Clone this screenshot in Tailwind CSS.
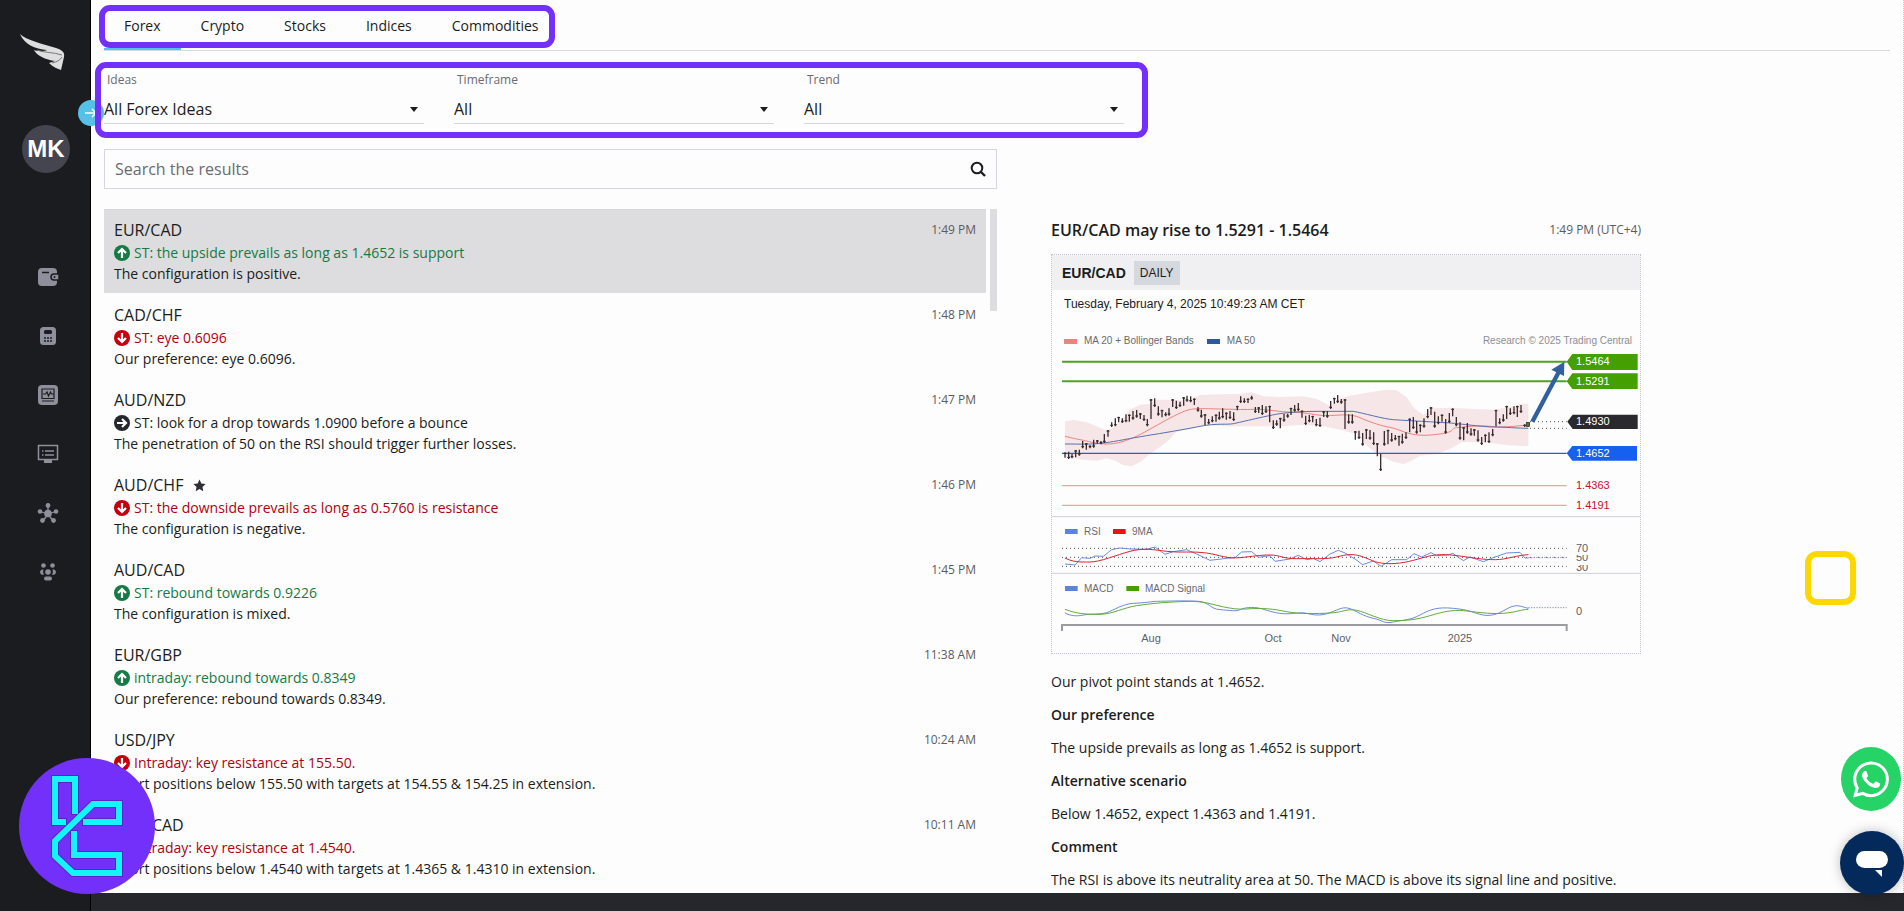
<!DOCTYPE html>
<html lang="en">
<head>
<meta charset="utf-8">
<title>Trading ideas</title>
<script src="https://cdn.jsdelivr.net/npm/@tailwindcss/browser@4"></script>
</head>
<body class="relative flex h-screen overflow-hidden bg-[#fdfdfd] font-['Open_Sans','Noto_Sans',sans-serif] text-sm text-[#1b1c20]">

<svg class="hidden" aria-hidden="true">
  <symbol id="up" viewBox="0 0 16 16"><circle cx="8" cy="8" r="8" fill="currentColor"/><path d="M8 13V4M4 8l4-4 4 4" fill="none" stroke="#fff" stroke-width="2.2"/></symbol>
  <symbol id="down" viewBox="0 0 16 16"><circle cx="8" cy="8" r="8" fill="currentColor"/><path d="M8 3v9M4 8l4 4 4-4" fill="none" stroke="#fff" stroke-width="2.2"/></symbol>
  <symbol id="side" viewBox="0 0 16 16"><circle cx="8" cy="8" r="8" fill="currentColor"/><path d="M3 8h9M8 4l4 4-4 4" fill="none" stroke="#fff" stroke-width="2.2"/></symbol>
  <symbol id="caret" viewBox="0 0 8 5"><path d="M0 0h8L4 5z" fill="#1b1c20"/></symbol>
</svg>

<aside class="relative flex w-[91px] shrink-0 flex-col items-center border-r border-black bg-[#1b1c20] pl-[2px]">
  <a href="#" aria-label="Home" class="mt-[32px] block">
    <svg class="h-[40px] w-[48px]" viewBox="3 0 48 40" overflow="visible">
      <path d="M1 2C7 8 24 12 37 16c6 2 9 4 8 9l-3 13c-3-1-8-3-12-7 2-1 4-1 6-2-9-1-19-6-21-11 5 2 11 1 13 0C16 17 5 12 1 2z" fill="#dededf"/>
      <path d="M18 18c8 3 16 2 25 5M33 31c5-1 8-3 10-6" stroke="#77787b" fill="none"/>
    </svg>
  </a>
  <div class="mt-[53px] flex size-12 items-center justify-center rounded-full bg-[#44454f] font-['Liberation_Sans',sans-serif] text-2xl font-bold text-white">MK</div>
  <nav class="mt-[92px] flex flex-col items-center gap-[35px] pl-1 text-[#8d909b]">
    <a href="#" aria-label="Wallet" class="flex h-6 items-center"><svg class="h-[20px] w-[22px]" viewBox="0 0 22 20"><rect x="1" y="1" width="19" height="18" rx="4" fill="currentColor"/><path d="M5 5.500h7" stroke="#1b1c20" stroke-width="1.500"/><path d="M22 7h-5a3 3 0 0 0 0 6h5z" fill="currentColor" stroke="#1b1c20" stroke-width="1.500"/><circle cx="17.500" cy="10" r="1" fill="#1b1c20"/></svg></a>
    <a href="#" aria-label="Calculator" class="flex h-6 items-center"><svg class="h-[18px] w-[16px]" viewBox="0 0 16 18"><rect width="16" height="18" rx="3.500" fill="currentColor"/><rect x="4" y="3" width="8" height="4" rx="1.500" fill="#1b1c20"/><path d="M4 11h2M7 11h2M10 11h2M4 14h2M7 14h2M10 14h2" stroke="#1b1c20" stroke-width="1.500"/></svg></a>
    <a href="#" aria-label="Charts" class="flex h-6 items-center"><svg class="h-[20px] w-[20px]" viewBox="0 0 20 20"><rect width="20" height="20" rx="4" fill="currentColor"/><path d="M4 4h12v9.500H4zM4 16h12M5 9h2.500l1.500-2 1.500 4 2-4 1 2h2" fill="none" stroke="#1b1c20" stroke-width="1.200"/></svg></a>
    <a href="#" aria-label="News" class="flex h-6 items-center"><svg class="h-[20px] w-[22px]" viewBox="0 0 22 20"><path d="M1.500 1.500h19v14h-19zM8 7h9M8 11h9M5 7h1.500M5 11h1.500" fill="none" stroke="currentColor" stroke-width="1.500"/><path d="M7 16h8v3H7z" fill="currentColor"/></svg></a>
    <a href="#" aria-label="Network" class="flex h-6 items-center"><svg class="h-[20px] w-[22px]" viewBox="0 0 22 20"><path d="M11 11V3M11 11L3 8.500M11 11l8-2.500M11 11l-5 7M11 11l5 7" stroke="currentColor" stroke-width="1.300"/><g fill="currentColor"><circle cx="11" cy="10.500" r="3.800"/><circle cx="11" cy="2.500" r="2.400"/><circle cx="3" cy="8.500" r="2.300"/><circle cx="19" cy="8.500" r="2.300"/><circle cx="5.500" cy="17.500" r="2.400"/><circle cx="16.500" cy="17.500" r="2.400"/></g></svg></a>
    <a href="#" aria-label="Community" class="flex h-6 items-center"><svg class="h-[18px] w-[18px]" viewBox="0 0 18 18"><g fill="currentColor"><circle cx="4.500" cy="2.500" r="2.300"/><circle cx="13.500" cy="2.500" r="2.300"/><circle cx="9" cy="9" r="2.800"/><path d="M4.500 6.500H3a2.700 2.700 0 0 0 0 5.200h2a5 5 0 0 1-.5-5.200zM13.500 6.500H15a2.700 2.700 0 0 1 0 5.200h-2a5 5 0 0 0 .5-5.200z"/><rect x="5" y="13.500" width="8" height="4" rx="2"/></g></svg></a>
  </nav>
  <button type="button" aria-label="Expand menu" class="absolute top-[100px] -right-[14px] z-10 flex size-[26px] items-center justify-center rounded-full bg-[#54c1e8]"><svg class="size-[14px]" viewBox="0 0 14 14"><path d="M1 7h11M8 3l4 4-4 4" fill="none" stroke="#fff" stroke-width="1.500"/></svg></button>
</aside>

<div class="flex min-w-0 flex-1 flex-col">
  <main class="flex min-h-0 flex-1 flex-col overflow-hidden border-r border-dotted border-[#c3c4cc] pr-[13px] pl-[13px]">
    <nav class="flex h-[51px] shrink-0 border-b border-[#d9dade] text-sm">
      <button type="button" class="border-b-2 border-[#54c1e8] px-5 pt-1">Forex</button>
      <button type="button" class="border-b-2 border-transparent px-5 pt-1">Crypto</button>
      <button type="button" class="border-b-2 border-transparent px-5 pt-1">Stocks</button>
      <button type="button" class="border-b-2 border-transparent px-5 pt-1">Indices</button>
      <button type="button" class="border-b-2 border-transparent px-5 pt-1">Commodities</button>
    </nav>

    <form class="mt-5 grid max-w-[1020px] shrink-0 grid-cols-3 gap-[30px]">
      <div class="relative">
        <label for="ideas" class="block px-[3px] text-xs leading-[18px] text-[#6a6b72]">Ideas</label>
        <select id="ideas" class="mt-[5px] h-[30px] w-full appearance-none border-b border-[#d5d7df] bg-transparent text-base"><option>All Forex Ideas</option></select>
        <svg class="pointer-events-none absolute right-[6px] bottom-[12px] h-[5px] w-[8px]"><use href="#caret"/></svg>
      </div>
      <div class="relative">
        <label for="timeframe" class="block px-[3px] text-xs leading-[18px] text-[#6a6b72]">Timeframe</label>
        <select id="timeframe" class="mt-[5px] h-[30px] w-full appearance-none border-b border-[#d5d7df] bg-transparent text-base"><option>All</option></select>
        <svg class="pointer-events-none absolute right-[6px] bottom-[12px] h-[5px] w-[8px]"><use href="#caret"/></svg>
      </div>
      <div class="relative">
        <label for="trend" class="block px-[3px] text-xs leading-[18px] text-[#6a6b72]">Trend</label>
        <select id="trend" class="mt-[5px] h-[30px] w-full appearance-none border-b border-[#d5d7df] bg-transparent text-base"><option>All</option></select>
        <svg class="pointer-events-none absolute right-[6px] bottom-[12px] h-[5px] w-[8px]"><use href="#caret"/></svg>
      </div>
    </form>

    <div class="mt-[25px] flex min-h-0 flex-1 gap-[54px]">
      <section class="flex w-1/2 min-w-0 shrink-0 flex-col">
        <div class="flex h-10 shrink-0 items-center border border-[#d5d7df] px-[10px]">
          <input type="search" aria-label="Search the results" placeholder="Search the results" class="min-w-0 flex-1 bg-transparent text-base outline-none placeholder:text-[#6a6b72]">
          <button type="button" aria-label="Search"><svg class="size-[16px]" viewBox="0 0 16 16"><circle cx="7" cy="7" r="5.300" fill="none" stroke="#1b1c20" stroke-width="2"/><path d="M10.500 10.500l4.500 4.500" stroke="#1b1c20" stroke-width="2.400"/></svg></button>
        </div>
        <div class="mt-5 flex min-h-0 flex-1 justify-between gap-1">
          <ul class="min-w-0 flex-1 overflow-hidden">
            <li class="h-[85px]"><article class="h-[84px] border-t border-[#d5d5da] bg-[#dddddf] px-[10px] pt-[8px]">
              <div class="flex h-6 items-center justify-between"><h3 class="text-base">EUR/CAD</h3><time class="text-xs text-[#5b5c62]">1:49 PM</time></div>
              <p class="flex h-[21px] items-center gap-1 text-[#157a44]"><svg class="size-4"><use href="#up"/></svg>ST: the upside prevails as long as 1.4652 is support</p>
              <p class="leading-[21px]">The configuration is positive.</p></article></li>
            <li class="h-[85px] px-[10px] pt-[9px]">
              <div class="flex h-6 items-center justify-between"><h3 class="text-base">CAD/CHF</h3><time class="text-xs text-[#5b5c62]">1:48 PM</time></div>
              <p class="flex h-[21px] items-center gap-1 text-[#b0000f]"><svg class="size-4 text-[#c4000c]"><use href="#down"/></svg>ST: eye 0.6096</p>
              <p class="leading-[21px]">Our preference: eye 0.6096.</p></li>
            <li class="h-[85px] px-[10px] pt-[9px]">
              <div class="flex h-6 items-center justify-between"><h3 class="text-base">AUD/NZD</h3><time class="text-xs text-[#5b5c62]">1:47 PM</time></div>
              <p class="flex h-[21px] items-center gap-1"><svg class="size-4 text-[#26272c]"><use href="#side"/></svg>ST: look for a drop towards 1.0900 before a bounce</p>
              <p class="leading-[21px]">The penetration of 50 on the RSI should trigger further losses.</p></li>
            <li class="h-[85px] px-[10px] pt-[9px]">
              <div class="flex h-6 items-center justify-between"><h3 class="flex items-center gap-[10px] text-base">AUD/CHF <svg class="size-[13px]" viewBox="0 0 24 24"><path d="M12 1l3.400 7.200 7.800 1-5.700 5.400 1.500 7.900-7-3.900-7 3.900 1.500-7.900L.8 9.200l7.800-1z" fill="#2e2f36"/></svg></h3><time class="text-xs text-[#5b5c62]">1:46 PM</time></div>
              <p class="flex h-[21px] items-center gap-1 text-[#b0000f]"><svg class="size-4 text-[#c4000c]"><use href="#down"/></svg>ST: the downside prevails as long as 0.5760 is resistance</p>
              <p class="leading-[21px]">The configuration is negative.</p></li>
            <li class="h-[85px] px-[10px] pt-[9px]">
              <div class="flex h-6 items-center justify-between"><h3 class="text-base">AUD/CAD</h3><time class="text-xs text-[#5b5c62]">1:45 PM</time></div>
              <p class="flex h-[21px] items-center gap-1 text-[#157a44]"><svg class="size-4"><use href="#up"/></svg>ST: rebound towards 0.9226</p>
              <p class="leading-[21px]">The configuration is mixed.</p></li>
            <li class="h-[85px] px-[10px] pt-[9px]">
              <div class="flex h-6 items-center justify-between"><h3 class="text-base">EUR/GBP</h3><time class="text-xs text-[#5b5c62]">11:38 AM</time></div>
              <p class="flex h-[21px] items-center gap-1 text-[#157a44]"><svg class="size-4"><use href="#up"/></svg>intraday: rebound towards 0.8349</p>
              <p class="leading-[21px]">Our preference: rebound towards 0.8349.</p></li>
            <li class="h-[85px] px-[10px] pt-[9px]">
              <div class="flex h-6 items-center justify-between"><h3 class="text-base">USD/JPY</h3><time class="text-xs text-[#5b5c62]">10:24 AM</time></div>
              <p class="flex h-[21px] items-center gap-1 text-[#b0000f]"><svg class="size-4 text-[#c4000c]"><use href="#down"/></svg>Intraday: key resistance at 155.50.</p>
              <p class="leading-[21px]">Short positions below 155.50 with targets at 154.55 &amp; 154.25 in extension.</p></li>
            <li class="h-[85px] px-[10px] pt-[9px]">
              <div class="flex h-6 items-center justify-between"><h3 class="text-base">USD/CAD</h3><time class="text-xs text-[#5b5c62]">10:11 AM</time></div>
              <p class="flex h-[21px] items-center gap-1 text-[#b0000f]"><svg class="size-4 text-[#c4000c]"><use href="#down"/></svg>Intraday: key resistance at 1.4540.</p>
              <p class="leading-[21px]">Short positions below 1.4540 with targets at 1.4365 &amp; 1.4310 in extension.</p></li>
          </ul>
          <div class="h-[102px] w-[7px] bg-[#dddddf]"></div>
        </div>
      </section>

      <section class="mt-[69px] w-full max-w-[590px] min-w-0">
        <div class="flex h-6 items-center justify-between"><h2 class="text-base font-semibold">EUR/CAD may rise to 1.5291 - 1.5464</h2><time class="text-xs text-[#5b5c62]">1:49 PM (UTC+4)</time></div>
        <figure class="mt-3 border border-dotted border-[#c3c4cc] font-['Liberation_Sans',sans-serif]">
          <div class="flex h-[35px] items-center gap-2 bg-[#f0f0f2] px-[10px]"><strong class="text-sm">EUR/CAD</strong><span class="bg-[#d6d8e0] px-[6px] text-xs leading-[24px]">DAILY</span></div>
          <p class="px-3 pt-[5px] text-xs leading-[18px]">Tuesday, February 4, 2025 10:49:23 AM CET</p>
          <div class="mt-5 flex h-[16px] items-center gap-[7px] pr-2 pl-3 text-[10px] leading-[16px] text-[#6a6b72]">
            <i class="h-[5px] w-[13px] bg-[#f58080]"></i><span>MA 20 + Bollinger Bands</span>
            <i class="ml-[6px] h-[5px] w-[13px] bg-[#30599c]"></i><span>MA 50</span>
            <span class="ml-auto text-[#8c8d93]">Research © 2025 Trading Central</span>
          </div>
          <svg class="block h-auto w-full" viewBox="1052 350 588 304" role="img" aria-label="EUR/CAD daily price chart with RSI and MACD">
            <g transform="translate(1040 340) scale(.33333)" fill="none" stroke-width="3">
              <path fill="#f6e6e7" d="M75 247L100 243 140 250 170 262 200 275 215 268 240 250 270 212 300 197 330 195 345 182 400 182 440 185 480 168 540 166 600 165 635 160 670 172 720 174 790 172 830 180 870 200 900 180 930 170 990 160 1040 152 1070 154 1100 175 1125 210 1150 228 1180 208 1230 206 1300 210 1360 212 1420 202 1445 194 1465 194 1465 322 1400 318 1350 312 1300 308 1265 310 1230 330 1190 345 1140 350 1115 365 1090 375 1060 368 1020 350 980 320 950 285 900 272 850 262 780 258 720 262 640 262 560 262 500 258 410 278 380 310 330 345 300 370 275 382 250 378 225 365 200 358 170 365 130 362 100 358 75 350z"/>
              <path stroke="#4fa321" stroke-width="6" d="M66 68H1580M66 127H1580"/>
              <path stroke="#2563b8" stroke-width="4" d="M66 343H1580"/>
              <path stroke="#f3a2a2" stroke-width="4" d="M66 440H1580M66 499H1580"/>
              <path stroke="#cfd0d8" d="M36 533H1800M36 703H1800"/>
              <path stroke="#4b4c55" stroke-width="3" stroke-dasharray="3 9" d="M1470 248H1580M1470 268H1580M66 628H1580M66 655H1580M66 682H1580"/>
              <path stroke="#8a90a8" stroke-dasharray="4 4" d="M1465 656H1580M1465 806H1580"/>
              <path stroke="#f08080" d="M75 292C100 298 110 300 130 304S170 315 200 315 250 308 280 296 360 252 400 232 450 210 475 209 600 213 640 211 720 220 760 220 830 230 860 230 930 222 960 236 1030 262 1050 265 1090 280 1110 284 1150 292 1200 285 1230 268 1250 266 1320 258 1350 262 1430 262 1460 258"/>
              <path stroke="#5570ad" d="M75 315C120 315 150 317 190 312S270 298 320 290 430 272 480 262 560 258 580 254 690 228 720 224 780 217 840 217H940C970 222 1030 240 1060 242S1200 250 1230 252 1330 264 1360 264 1440 268 1465 268"/>
              <path id="candles" stroke="#3a2d30" stroke-width="4"/>
              <rect x="1460" y="250" width="9" height="13" fill="#4a7a1c" stroke="#222" stroke-width="2"/>
              <path stroke="#30609f" stroke-width="13" d="M1477 248L1556 100"/>
              <path fill="#30609f" d="M1573 68L1534 92 1572 111z"/>
              <path stroke="#6b8bd6" d="M75 675L105 678 125 656 150 658 165 651 190 652 215 632 240 627 270 630 320 631 345 624 375 646 400 638 440 632 470 645 510 664 560 658 585 656 605 639 635 638 655 655 690 650 705 667 750 660 775 649 800 662 820 658 840 668 870 645 895 634 915 642 945 660 968 677 1000 666 1023 682 1055 662 1100 662 1122 644 1145 654 1173 641 1190 650 1225 648 1238 643 1270 665 1290 654 1330 668 1365 654 1400 642 1440 640 1455 657 1465 657"/>
              <path stroke="#d82230" d="M75 657C100 670 120 669 150 669S230 648 270 637 340 632 380 637 460 636 500 642 560 660 600 656 660 648 690 648 730 660 770 659 860 662 890 654 940 643 970 654 1010 674 1050 674 1120 664 1160 653 1240 648 1280 654 1360 665 1390 660 1440 648 1465 647"/>
              <path stroke="#6b8bd6" d="M75 822C90 830 110 833 130 828S180 828 200 821 250 794 280 793 340 787 350 787 440 784 475 787 510 810 540 812 590 818 600 812 640 803 660 808 700 822 730 824 780 818 800 823 840 832 870 821 910 802 930 809 970 832 1000 838 1030 855 1060 849 1110 844 1140 828 1190 803 1240 808 1290 818 1320 826 1370 827 1400 810 1440 802 1465 808"/>
              <path stroke="#63ab3c" d="M75 811C110 824 140 827 180 826S250 806 290 800 360 791 400 789 460 786 490 790 570 814 620 810 700 810 740 818 830 824 870 822 920 808 950 814 1020 845 1060 845 1130 842 1170 830 1240 812 1270 815 1350 826 1390 823 1440 812 1465 811"/>
              <path stroke="#9b9ca0" stroke-width="6" d="M66 876V858H1580V876"/>
              <path fill="#43a000" d="M1580 68L1597 45H1793V93H1597zM1580 127L1597 103H1793V150H1597z"/>
              <path fill="#2a2a2e" d="M1582 248L1598 227H1793V270H1598z"/>
              <path fill="#1660f0" d="M1580 343L1597 321H1791V365H1597z"/>
              <path fill="#5a84dc" d="M75 570h38v15H75zM75 741h38v15H75z"/>
              <path fill="#ea1218" d="M219 570h38v15h-38z"/>
              <path fill="#43a000" d="M259 741h38v15h-38z"/>
            </g>
            <g font-size="11" fill="#fff"><text x="1576" y="366">1.5464</text><text x="1576" y="386">1.5291</text><text x="1576" y="426">1.4930</text><text x="1576" y="458">1.4652</text></g>
            <g font-size="11" fill="#c4121c"><text x="1576" y="490">1.4363</text><text x="1576" y="510">1.4191</text></g>
            <g font-size="10" fill="#6a6b72"><text x="1084" y="536">RSI</text><text x="1132" y="536">9MA</text><text x="1084" y="593">MACD</text><text x="1145" y="593">MACD Signal</text></g>
            <g font-size="11" fill="#5f6067">
              <text x="1576" y="572">30</text><path fill="#fdfdfd" d="M1575 560h16v6h-16z"/>
              <text x="1576" y="562">50</text><path fill="#fdfdfd" d="M1575 551h16v5h-16z"/>
              <text x="1576" y="553">70</text><text x="1576" y="616">0</text>
              <g text-anchor="middle"><text x="1151" y="643">Aug</text><text x="1273" y="643">Oct</text><text x="1341" y="643">Nov</text><text x="1460" y="643">2025</text></g>
            </g>
          </svg>
        </figure>
        <div class="mt-[17px] flex flex-col gap-3 leading-[21px]">
          <p>Our pivot point stands at 1.4652.</p>
          <h3 class="font-semibold">Our preference</h3>
          <p>The upside prevails as long as 1.4652 is support.</p>
          <h3 class="font-semibold">Alternative scenario</h3>
          <p>Below 1.4652, expect 1.4363 and 1.4191.</p>
          <h3 class="font-semibold">Comment</h3>
          <p>The RSI is above its neutrality area at 50. The MACD is above its signal line and positive.</p>
        </div>
      </section>
    </div>
  </main>
  <footer class="h-[18px] shrink-0 bg-[#26272c]"></footer>
</div>

<!-- Highlight frames over the tabs and the filters -->
<div class="pointer-events-none absolute top-[5px] left-[99px] z-20 h-[43px] w-[456px] rounded-[11px] border-6 border-[#7430fb]"></div>
<div class="pointer-events-none absolute top-[62px] left-[95px] z-20 h-[76px] w-[1053px] rounded-[11px] border-6 border-[#7430fb]"></div>
<div class="pointer-events-none absolute top-[551px] right-[48px] h-[54px] w-[51px] rounded-xl border-6 border-[#fdd800]"></div>

<!-- Brand badge -->
<svg class="absolute bottom-[17px] left-[19px] size-[136px]" viewBox="19 758 136 136">
  <circle cx="87" cy="826" r="68" fill="#7430fb"/>
  <g fill="none" stroke="#5b22cc" stroke-width="8"><path d="M75 815V779H55V822H67"/><path d="M82 822H119V804H93L55 841V856L73 873H119V855H74V830"/></g>
  <g fill="none" stroke="#14f4fb" stroke-width="6"><path d="M75 814V779H55V822H66"/><path d="M83 822H119V804H93L55 841V856L73 873H119V855H74V831"/></g>
</svg>

<button type="button" aria-label="WhatsApp" class="absolute right-[3px] bottom-[100px] flex h-[64px] w-[60px] items-center justify-center rounded-[50%] bg-[#25d366]">
  <svg class="h-[37px] w-[36px]" viewBox="0 0 24 24" fill="#fff"><path d="M17.472 14.382c-.297-.149-1.758-.867-2.030-.967-.273-.099-.471-.148-.670.150-.197.297-.767.966-.940 1.164-.173.199-.347.223-.644.075-.297-.150-1.255-.463-2.390-1.475-.883-.788-1.480-1.761-1.653-2.059-.173-.297-.018-.458.130-.606.134-.133.298-.347.446-.520.149-.174.198-.298.298-.497.099-.198.050-.371-.025-.520-.075-.149-.669-1.612-.916-2.207-.242-.579-.487-.500-.669-.510-.173-.008-.371-.010-.570-.010-.198 0-.520.074-.792.372-.272.297-1.040 1.016-1.040 2.479 0 1.462 1.065 2.875 1.213 3.074.149.198 2.096 3.200 5.077 4.487.709.306 1.262.489 1.694.625.712.227 1.360.195 1.871.118.571-.085 1.758-.719 2.006-1.413.248-.694.248-1.289.173-1.413-.074-.124-.272-.198-.570-.347M12.050 21.785a9.870 9.870 0 0 1-5.031-1.378l-.361-.214-3.741.982.998-3.648-.235-.374a9.860 9.860 0 0 1-1.510-5.260c.001-5.450 4.436-9.884 9.888-9.884a9.830 9.830 0 0 1 9.878 9.892c-.003 5.450-4.437 9.884-9.885 9.884M20.463 3.488A11.820 11.820 0 0 0 12.050 0C5.495 0 .160 5.335.157 11.892c0 2.096.547 4.142 1.588 5.945L.057 24l6.305-1.654a11.880 11.880 0 0 0 5.683 1.448c6.554 0 11.890-5.335 11.893-11.893a11.820 11.820 0 0 0-3.480-8.413z"/></svg>
</button>
<button type="button" aria-label="Open chat" class="absolute right-0 bottom-[16px] flex size-[64px] items-center justify-center rounded-full bg-[#042a5c] shadow-[0_0_12px_rgba(0,0,0,0.25)]">
  <svg class="h-[27px] w-[32px]" viewBox="0 0 32 27" fill="#fff"><rect y="1" width="32" height="17" rx="8.500"/><path d="M19 20h7v7z"/></svg>
</button>

<script>
// One entry per session: x, high, low
const bars = [75,340,356,86,338,360,96,345,358,107,333,355,118,332,350,128,306,328,139,312,332,150,318,328,161,302,326,172,303,314,183,306,316,193,285,312,204,273,293,215,250,264,226,238,262,236,233,250,247,238,252,258,226,250,268,226,248,279,216,242,290,213,236,301,222,240,312,228,246,322,240,262,333,180,240,344,178,204,355,202,230,366,212,235,377,220,232,387,208,230,398,180,204,409,185,210,420,188,204,431,174,200,441,170,188,452,172,190,463,178,198,474,204,218,484,212,236,495,225,258,506,240,256,517,232,250,528,226,248,538,218,242,548,208,238,559,220,242,570,216,240,581,220,246,592,200,214,602,172,192,613,178,192,624,178,192,635,170,182,646,204,222,656,204,222,667,198,228,678,202,222,689,200,250,700,244,270,710,244,260,721,236,268,732,225,248,743,224,236,753,206,228,764,198,218,775,192,216,786,214,236,797,230,258,808,228,250,818,230,250,829,240,262,840,236,264,851,216,234,862,216,236,872,186,210,883,176,194,893,168,192,904,180,194,915,180,270,926,226,254,937,226,254,946,276,302,957,275,300,968,282,320,979,270,300,990,273,302,1001,280,318,1012,312,352,1022,345,396,1033,276,320,1044,272,316,1055,282,308,1066,288,304,1077,290,320,1087,284,314,1098,280,300,1109,238,280,1120,234,270,1130,246,284,1141,256,280,1152,238,266,1163,210,238,1173,204,228,1184,218,266,1195,232,256,1206,226,248,1217,240,284,1228,222,252,1238,208,232,1249,234,262,1260,250,302,1271,264,304,1282,252,284,1293,268,290,1303,270,290,1314,274,308,1325,294,318,1336,286,310,1347,280,312,1358,270,292,1368,212,262,1379,238,256,1390,226,248,1400,200,240,1411,208,228,1422,202,226,1432,200,234,1443,198,222,1454,256,264];
let d = "";
for (let i = 0; i < bars.length; i += 3) {
  const [x, hi, lo] = bars.slice(i, i + 3);
  const body = (i / 3) % 3 ? lo - 5 : hi + 3;
  d += `M${x} ${hi}V${lo}M${x - 4} ${body}h8`;
}
document.getElementById("candles").setAttribute("d", d);
</script>
</body>
</html>
